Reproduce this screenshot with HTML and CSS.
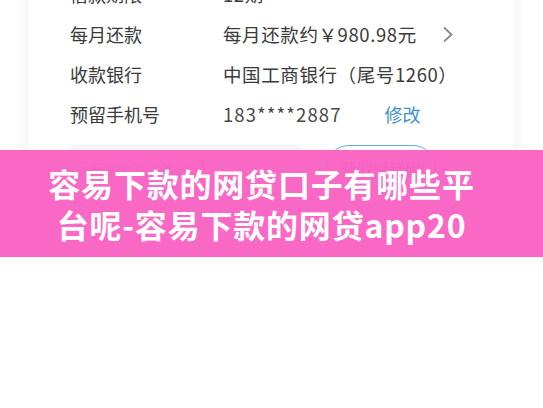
FILE: index.html
```html
<!DOCTYPE html>
<html lang="zh-CN">
<head>
<meta charset="utf-8">
<link rel="stylesheet" href="styles.css">
</head>
<body>
<div class="page">
  <div class="card">
    <div class="row">
      <span class="label">借款期限</span>
      <span class="value">12期</span>
    </div>
    <div class="row">
      <span class="label">每月还款</span>
      <span class="value">每月还款约￥980.98元</span>
      <svg class="chev" width="12" height="17" viewBox="0 0 12 17"><path d="M2 1.5 L9.5 8.5 L2 15.5" fill="none" stroke="#8a8a8a" stroke-width="1.8"/></svg>
    </div>
    <div class="row">
      <span class="label">收款银行</span>
      <span class="value">中国工商银行（尾号1260）</span>
    </div>
    <div class="row">
      <span class="label">预留手机号</span>
      <span class="value phone">183****2887</span>
      <span class="edit">修改</span>
    </div>
    <div class="code-row">
      <div class="code-input">请输入短信验证码</div>
      <div class="code-btn">获取验证码</div>
    </div>
  </div>
  <div class="banner">
    <div class="banner-text">容易下款的网贷口子有哪些平<br>台呢-容易下款的网贷app20</div>
  </div>
</div>
</body>
</html>
```

FILE: styles.css
```css
html, body {
  margin: 0;
  padding: 0;
}
body {
  background: #ffffff;
  font-family: "Noto Sans CJK SC", "Noto Sans", sans-serif;
  width: 543px;
  height: 408px;
  overflow: hidden;
}
.page {
  position: relative;
  display: flow-root;
  height: 408px;
}
.card {
  margin: -26px 29px 0 28px;
  background: #ffffff;
  box-shadow: 0 0 18px rgba(0, 0, 0, 0.07);
  padding: 0 0 28px 42px;
  border-radius: 0 0 6px 6px;
}
.row {
  display: flex;
  align-items: center;
  height: 40px;
  color: #3a3a3a;
  font-size: 18px;
}
.label {
  width: 153px;
  flex: none;
}
.value {
  color: #3a3a3a;
  font-size: 18.5px;
  letter-spacing: 0.6px;
}
.phone {
  color: #4a4a4a;
  letter-spacing: 1.1px;
}
.chev {
  margin-left: 25px;
}
.edit {
  margin-left: 43px;
  color: #3f8fcb;
}
.code-row {
  display: flex;
  align-items: stretch;
  margin-top: 11px;
  height: 46px;
}
.code-input {
  width: 218px;
  background: #f5f6f7;
  border-radius: 4px;
  color: #b8b8b8;
  font-size: 15px;
  display: flex;
  align-items: center;
  padding-left: 15px;
}
.code-btn {
  margin-left: 23px;
  width: 108px;
  border: 1.5px solid #6aaad8;
  border-radius: 23px;
  color: #5a86b8;
  font-size: 16px;
  display: flex;
  align-items: center;
  justify-content: center;
}
.banner {
  position: absolute;
  left: 0;
  right: 0;
  top: 150px;
  height: 107px;
  padding-right: 20px;
  background: rgba(250, 96, 194, 0.95);
  display: flex;
  align-items: center;
  justify-content: center;
}
.banner-text {
  color: #ffffff;
  font-weight: 700;
  font-size: 32px;
  line-height: 41px;
  text-align: center;
  letter-spacing: 0.8px;
}
```
